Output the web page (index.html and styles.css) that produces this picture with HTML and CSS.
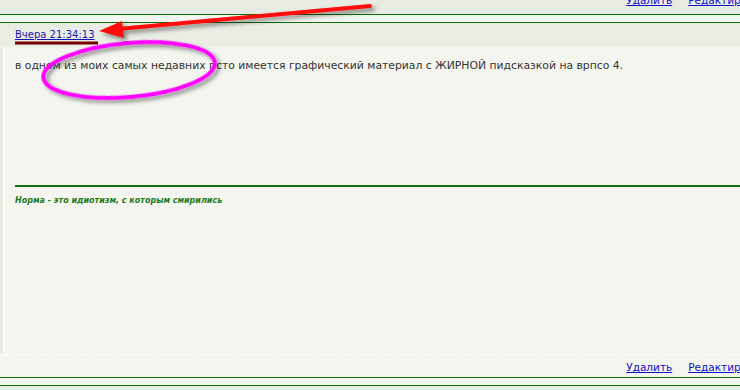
FILE: index.html
```html
<!DOCTYPE html>
<html lang="ru">
<head>
<meta charset="utf-8">
<title>Пост</title>
<link rel="stylesheet" href="styles.css">
</head>
<body>
<div class="page">
  <div class="post-foot prev">
    <a href="#">Удалить</a>
    <a href="#">Редактировать</a>
  </div>
  <div class="sep"></div>
  <div class="post">
    <div class="post-head"><a href="#" class="date">Вчера 21:34:13</a></div>
    <div class="post-body">
      <div class="post-text">в одном из моих самых недавних псто имеется графический материал с ЖИРНОЙ пидсказкой на врпсо 4.</div>
      <div class="sig">Норма - это идиотизм, с которым смирились</div>
    </div>
    <div class="post-foot">
      <a href="#">Удалить</a>
      <a href="#">Редактировать</a>
    </div>
  </div>
  <div class="sep"></div>
  <div class="after"></div>

  <svg class="annot" width="740" height="390" viewBox="0 0 740 390" xmlns="http://www.w3.org/2000/svg">
    <defs>
      <filter id="sh" x="-20%" y="-50%" width="140%" height="200%">
        <feDropShadow dx="3" dy="3" stdDeviation="2" flood-color="#000" flood-opacity="0.45"/>
      </filter>
    </defs>
    <line x1="15" y1="43" x2="98" y2="43" stroke="#7a0000" stroke-width="3"/>
    <ellipse cx="129" cy="70" rx="86" ry="27" fill="none" stroke="#ff00ff" stroke-width="4" transform="rotate(-5 129 70)" filter="url(#sh)"/>
    <g filter="url(#sh)">
      <line x1="370" y1="6" x2="118" y2="29" stroke="#ff0a0a" stroke-width="4" stroke-linecap="round"/>
      <polygon points="99,31 122,21 124,38" fill="#ff0a0a"/>
    </g>
  </svg>
</div>
</body>
</html>
```

FILE: styles.css
```css
html, body {
  margin: 0;
  padding: 0;
  overflow: hidden;
  background: #e9ece3;
}

.page {
  position: relative;
  width: 776px;
  height: 390px;
  overflow: hidden;
  font-family: "DejaVu Sans", Verdana, sans-serif;
  font-size: 10.8px;
  color: #333333;
}

a {
  color: #1010c8;
}

.post-foot {
  display: flex;
  justify-content: flex-end;
  gap: 16px;
  height: 23px;
  padding: 5px 4px 0 0;
  box-sizing: border-box;
  border-top: 1px dashed #ffffff;
  font-size: 10.5px;
  line-height: 14px;
  background: #f3f5ee;
}

.post-foot.prev {
  margin-top: -10px;
  height: 24px;
  border-top: 0;
  padding-top: 3px;
  background: #e8ebe2;
}

.sep {
  height: 7px;
  border-top: 1px solid #0b6e0b;
  border-bottom: 1px solid #0b6e0b;
  background: #f4f6f0;
}

.post-head {
  height: 24px;
  padding: 6px 0 0 15px;
  box-sizing: border-box;
  background: #eaede4;
  font-size: 10px;
  line-height: 12px;
}

.date {
  color: #1515b5;
}

.post-body {
  height: 307px;
  box-sizing: border-box;
  margin-left: 3px;
  border-left: 1px solid #ffffff;
  padding: 12px 0 0 11px;
  background: #f3f5ee;
}

.post-text {
  height: 126px;
  line-height: 14px;
}

.sig {
  border-top: 2px solid #136f13;
  padding-top: 8px;
  font-size: 8px;
  line-height: 12px;
  font-weight: bold;
  font-style: italic;
  color: #1f7a1f;
}

.after {
  height: 10px;
  background: #e9ece3;
}

.annot {
  position: absolute;
  left: 0;
  top: 0;
  pointer-events: none;
}
```
